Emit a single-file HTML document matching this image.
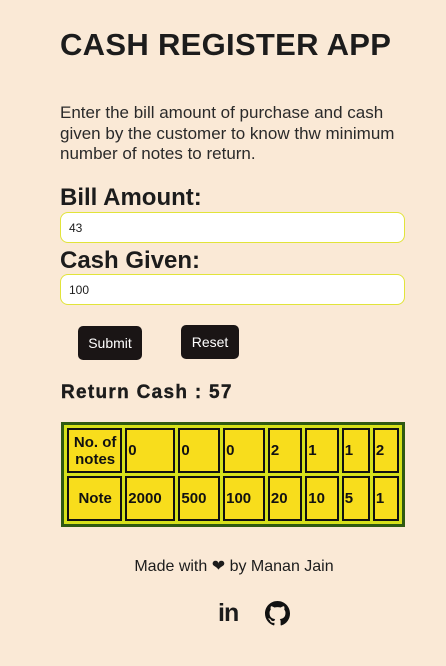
<!DOCTYPE html>
<html><head><meta charset="utf-8"><style>
body{margin:0;width:446px;height:666px;background:#fae9d6;font-family:"Liberation Sans",sans-serif;color:#1c1c1c;position:relative;overflow:hidden}
.a{position:absolute}
h1{position:absolute;left:60px;top:27px;margin:0;font-size:31px;font-weight:bold;letter-spacing:0.3px}
.p{left:60px;top:103px;width:360px;font-size:17px;line-height:20.5px;color:#2a2a2a}
.l{left:60px;font-size:24px;font-weight:bold}
.in{left:60px;width:343px;height:29px;background:#fff;border:1.5px solid #e1e43a;border-radius:8px;font-size:12px;line-height:31px;text-indent:8px}
.b{background:#1a1515;color:#fff;border-radius:5px;font-size:14px;text-align:center}
table{position:absolute;left:61px;top:422px;width:344px;height:105px;border:3px solid #2f5a12;background:#d6e11a;border-spacing:3px;padding:0;table-layout:fixed;box-sizing:border-box}
td{border:2px solid #111;background:#f8dd1c;font-weight:bold;font-size:15px;padding:0 0 0 1px;color:#111;height:41px;box-sizing:border-box;overflow:hidden;white-space:nowrap}
td.h{text-align:center;line-height:17px;white-space:normal}
</style></head><body>
<h1>CASH REGISTER APP</h1>
<div class="a p">Enter the bill amount of purchase and cash given by the customer to know thw minimum number of notes to return.</div>
<div class="a l" style="top:184px">Bill Amount:</div>
<div class="a in" style="top:212px">43</div>
<div class="a l" style="top:247px">Cash Given:</div>
<div class="a in" style="top:274px">100</div>
<div class="a b" style="left:78px;top:326px;width:64px;height:34px;line-height:34px">Submit</div>
<div class="a b" style="left:181px;top:325px;width:58px;height:34px;line-height:34px">Reset</div>
<div class="a" style="left:61px;top:382px;font-size:19px;font-weight:900;letter-spacing:1.3px;-webkit-text-stroke:0.4px #1c1c1c">Return Cash : 57</div>
<table>
<colgroup><col style="width:53px"><col style="width:48px"><col style="width:40px"><col style="width:40px"><col style="width:33px"><col style="width:32px"><col style="width:27px"><col style="width:25px"></colgroup>
<tr><td class="h">No. of<br>notes</td><td>0</td><td>0</td><td>0</td><td>2</td><td>1</td><td>1</td><td>2</td></tr>
<tr><td class="h">Note</td><td>2000</td><td>500</td><td>100</td><td>20</td><td>10</td><td>5</td><td>1</td></tr>
</table>
<div class="a" style="left:0;width:468px;text-align:center;top:556px;font-size:16px">Made with <span>❤</span> by Manan Jain</div>
<div class="a" style="left:218px;top:599px;font-size:25px;font-weight:bold;letter-spacing:-1px">in</div>
<svg class="a" style="left:265px;top:601px" width="25" height="25" viewBox="0 0 16 16"><path fill="#111" d="M8 0C3.58 0 0 3.58 0 8c0 3.54 2.29 6.53 5.47 7.59.4.07.55-.17.55-.38v-1.33c-2.23.48-2.7-1.07-2.7-1.07-.36-.93-.89-1.17-.89-1.17-.73-.5.06-.49.06-.49.8.06 1.23.83 1.23.83.72 1.22 1.87.87 2.33.66.07-.52.28-.87.51-1.07-1.78-.2-3.65-.89-3.65-3.95 0-.87.31-1.59.82-2.15-.08-.2-.36-1.02.08-2.12 0 0 .67-.21 2.2.82a7.6 7.6 0 0 1 4 0c1.53-1.04 2.2-.82 2.2-.82.44 1.1.16 1.92.08 2.12.51.56.82 1.27.82 2.15 0 3.07-1.87 3.75-3.65 3.95.29.25.54.73.54 1.48v2.2c0 .21.15.46.55.38A8 8 0 0 0 16 8c0-4.42-3.58-8-8-8z"/></svg>
</body></html>
